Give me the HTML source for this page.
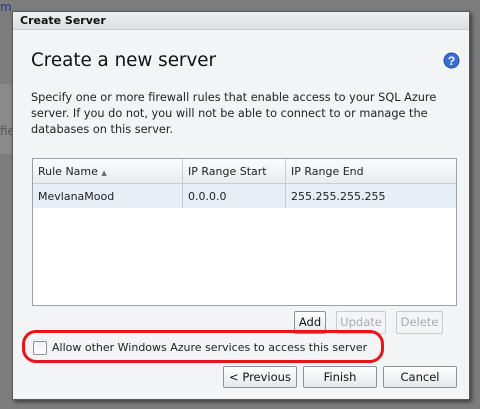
<!DOCTYPE html>
<html><head><style>
body{margin:0;width:480px;height:409px;background:#7d7d7d;position:relative;overflow:hidden;font-family:"DejaVu Sans","Liberation Sans",sans-serif;}
.a{position:absolute}
.dlg{left:12px;top:11px;width:456px;height:387px;background:#f3f4f6;border:1px solid #5a5a5a;box-shadow:2px 2px 4px rgba(0,0,0,.5)}
.tb{left:0;top:0;width:456px;height:18px;background:linear-gradient(#eef0f2,#dcdfe3);border-bottom:1px solid #c8cbd0;font-size:11px;font-weight:bold;color:#111;line-height:18px;padding-left:7px;box-sizing:border-box}
.btn{border:1px solid #8b929a;border-radius:2px;background:linear-gradient(#fff,#e4e7eb);font-size:11.5px;color:#111;text-align:center;box-sizing:border-box}
.dis{color:#a8acb1;border-color:#c8ccd1;background:#f3f4f6}
</style></head><body>
<div class="a" style="left:0;top:0;font-size:12px;color:#1a3d7a">m</div>
<div class="a" style="left:0;top:84px;width:12px;height:70px;background:#8a8a8a"></div>
<div class="a" style="left:0;top:124px;font-size:12px;color:#555">fie</div>
<div class="a dlg">
 <div class="a tb">Create Server</div>
 <div class="a" style="left:18px;top:38px;font-size:18.3px;color:#111">Create a new server</div>
 <svg class="a" style="left:430px;top:40px" width="17" height="17"><circle cx="8.5" cy="8.5" r="7.5" fill="#3b6fd4" stroke="#1f4aa0"/><text x="8.5" y="13" font-size="12" font-weight="bold" fill="#fff" text-anchor="middle" font-family="Liberation Sans">?</text></svg>
 <div class="a" style="left:18px;top:78px;width:420px;font-size:11.3px;line-height:16px;color:#222">Specify one or more firewall rules that enable access to your SQL Azure server. If you do not, you will not be able to connect to or manage the databases on this server.</div>
 <div class="a" style="left:19px;top:146px;width:423px;height:146px;background:#fff;border:1px solid #9aa1a8">
  <div class="a" style="left:0;top:0;width:423px;height:24px;background:linear-gradient(#fafbfc,#e9ecef);border-bottom:1px solid #c9cdd2"></div>
  <div class="a" style="left:0;top:25px;width:423px;height:24px;background:#e8eef6"></div>
  <div class="a" style="left:149px;top:0;width:1px;height:49px;background:#c9cdd2"></div>
  <div class="a" style="left:252px;top:0;width:1px;height:49px;background:#c9cdd2"></div>
  <div class="a" style="left:5px;top:6px;font-size:11px;color:#222">Rule Name <span style="font-size:7px;color:#666">▲</span></div>
  <div class="a" style="left:155px;top:6px;font-size:11px;color:#222">IP Range Start</div>
  <div class="a" style="left:258px;top:6px;font-size:11px;color:#222">IP Range End</div>
  <div class="a" style="left:5px;top:31px;font-size:11px;color:#222">MevlanaMood</div>
  <div class="a" style="left:155px;top:31px;font-size:11px;color:#222">0.0.0.0</div>
  <div class="a" style="left:258px;top:31px;font-size:11px;color:#222">255.255.255.255</div>
 </div>
 <div class="a btn" style="left:281px;top:299px;width:32px;height:23px;line-height:21px">Add</div>
 <div class="a btn dis" style="left:323px;top:299px;width:50px;height:23px;line-height:21px">Update</div>
 <div class="a btn dis" style="left:383px;top:299px;width:47px;height:23px;line-height:21px">Delete</div>
 <div class="a" style="left:9px;top:318px;width:356px;height:27px;border:3px solid #e8141b;border-radius:14px"></div>
 <div class="a" style="left:20px;top:329px;width:12px;height:12px;border:1px solid #8b929a;border-radius:2px;background:linear-gradient(#eef0f3,#fff)"></div>
 <div class="a" style="left:39px;top:329px;font-size:11px;color:#222">Allow other Windows Azure services to access this server</div>
 <div class="a btn" style="left:210px;top:354px;width:74px;height:22px;line-height:20px">&lt; Previous</div>
 <div class="a btn" style="left:290px;top:354px;width:74px;height:22px;line-height:20px">Finish</div>
 <div class="a btn" style="left:370px;top:354px;width:74px;height:22px;line-height:20px">Cancel</div>
</div>
</body></html>
